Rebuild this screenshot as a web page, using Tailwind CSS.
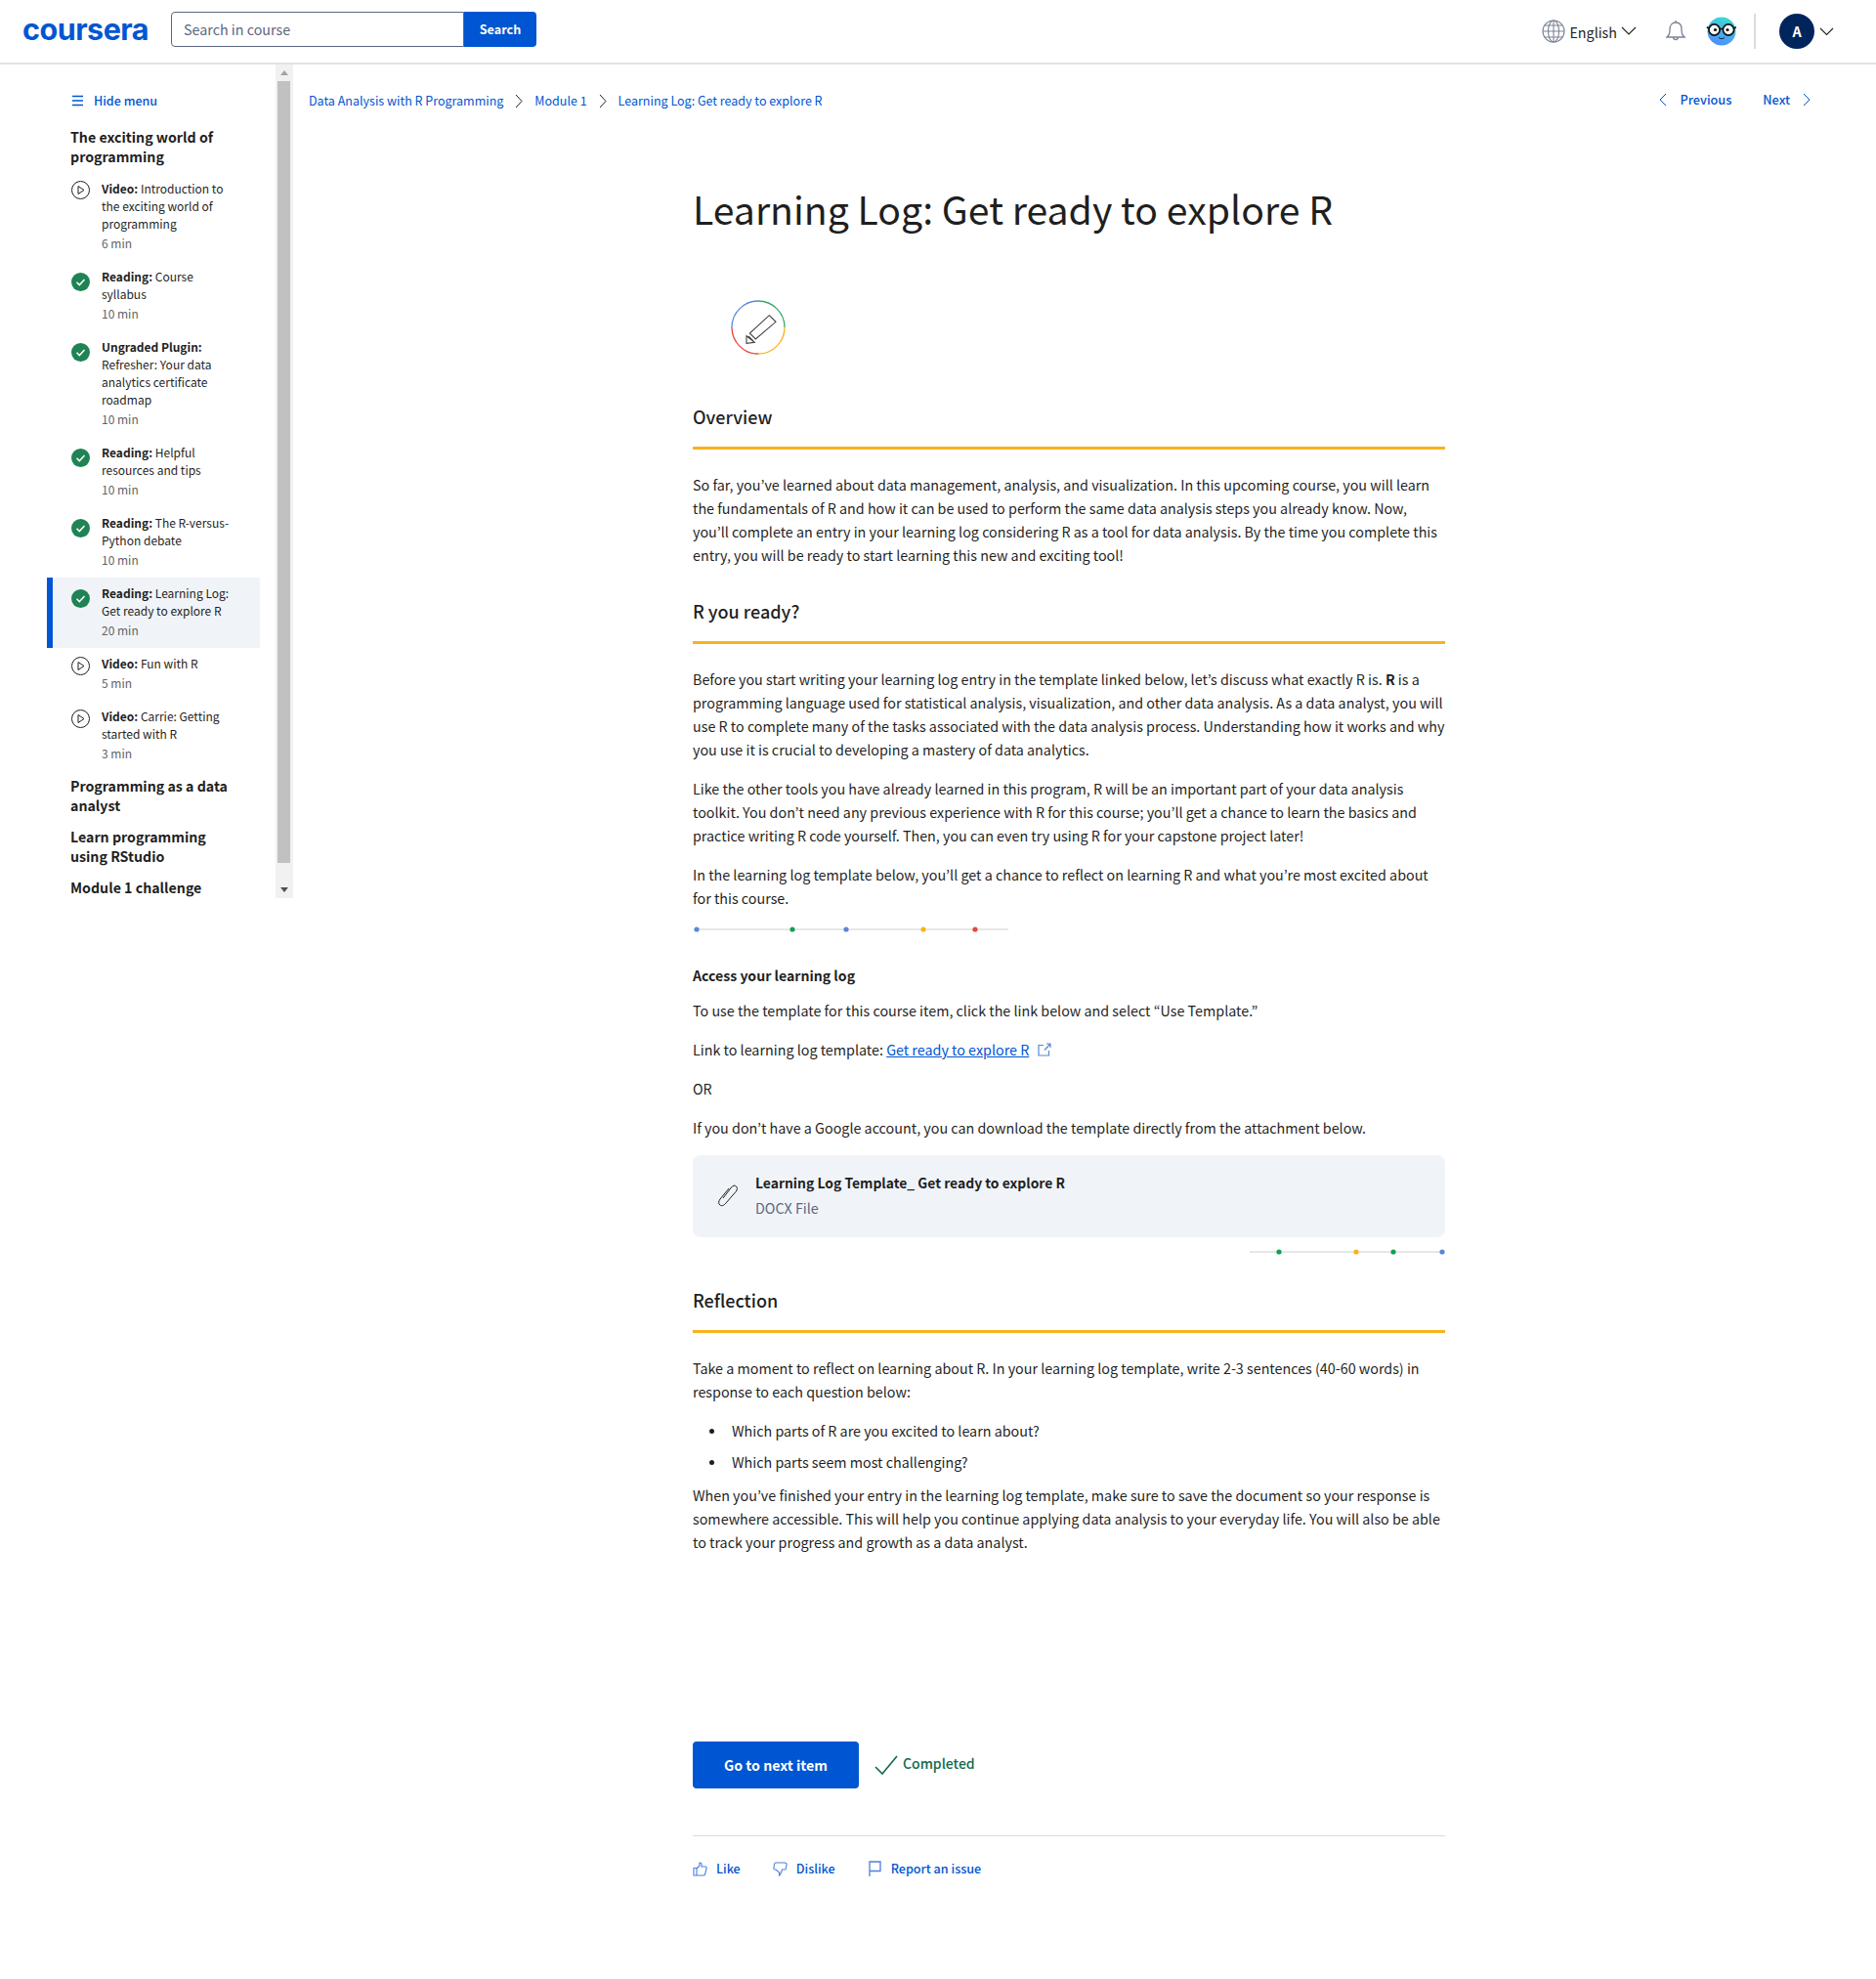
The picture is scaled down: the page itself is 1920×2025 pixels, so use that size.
<!DOCTYPE html>
<html lang="en">
<head>
<meta charset="utf-8">
<title>Learning Log</title>
<script src="https://cdn.jsdelivr.net/npm/@tailwindcss/browser@4"></script>
</head>
<body class="bg-white text-[#1f1f1f] font-['Noto_Sans_CJK_KR','Noto_Sans',sans-serif] w-[1920px] h-[2025px] overflow-hidden">
<header class="h-[66px] border-b-2 border-[#e3e3e3] flex items-center relative">
  <div class="w-[152px] ml-[23px] font-['Inter',sans-serif] font-bold text-[30.5px] leading-[30px] tracking-[-0.5px] text-[#0056d2] mt-[-4px]">coursera</div>
  <div class="flex mt-[-4px] h-[36px]">
    <div class="w-[300px] h-[36px] border border-[#5b6780] rounded-l-[4px] pl-[12px] text-[14.3px] leading-[33px] text-[#5b6780]">Search in course</div>
    <div class="w-[74px] h-[36px] bg-[#0056d2] rounded-r-[4px] text-white font-bold text-[12.6px] leading-[36px] text-center">Search</div>
  </div>
  <div class="ml-auto flex items-center h-[36px]">
    <svg class="w-[24px] h-[24px]" viewBox="0 0 24 24" fill="none" stroke="#7a8296" stroke-width="1.1"><circle cx="12" cy="12" r="11"/><ellipse cx="12" cy="12" rx="5.5" ry="11"/><path d="M12 1v22M1 12h22M3 6h18M3 18h18"/></svg>
    <span class="ml-[4px] text-[14.3px] leading-[24px] mt-[1px]">English</span>
    <svg class="ml-[4px] w-[16px] h-[10px]" viewBox="0 0 16 10" fill="none" stroke="#1f1f1f" stroke-width="1.1"><path d="M1 1l7 7 7-7"/></svg>
    <svg class="ml-[29px] w-[22px] h-[24px]" viewBox="0 0 22 24" fill="none" stroke="#7a8296" stroke-width="1.3"><path d="M2 18c2-2 3-3 3-8s3-7 6-7 6 2 6 7 1 6 3 8z"/><path d="M11 3V1M8.5 18a2.5 2.5 0 0 0 5 0"/></svg>
    <svg class="ml-[20px] w-[32px] h-[32px]" viewBox="0 0 32 32"><defs><linearGradient id="og" x1="0.7" y1="0" x2="0.4" y2="1"><stop offset="0" stop-color="#3fdcd0"/><stop offset="1" stop-color="#4d8dff"/></linearGradient></defs><circle cx="16" cy="16" r="14.5" fill="url(#og)"/><circle cx="8.5" cy="14.5" r="5.6" fill="#fff" stroke="#111" stroke-width="1.7"/><circle cx="23" cy="14.5" r="5.6" fill="#fff" stroke="#111" stroke-width="1.7"/><circle cx="9.5" cy="14.5" r="1.6" fill="#111"/><circle cx="22" cy="14.5" r="1.6" fill="#111"/><path d="M14 13.5h3.500M3 13L.8 11.800M28.500 13l2.300-1.200" stroke="#111" stroke-width="1.7"/><path d="M13 22.500c2 1.500 4 1.500 6 0" fill="none" stroke="#123" stroke-width="1"/></svg>
    <div class="ml-[17px] w-[2px] h-[36px] bg-[#dcdcdc]"></div>
    <div class="ml-[24px] w-[36px] h-[36px] rounded-full bg-[#00255d] text-white font-bold text-[14.4px] leading-[35px] text-center">A</div>
    <svg class="ml-[5px] mr-[43px] w-[15px] h-[9px]" viewBox="0 0 15 9" fill="none" stroke="#1f1f1f" stroke-width="1.1"><path d="M1 1l6.500 6.500L14 1"/></svg>
  </div>
</header>
<div class="flex">
  <aside class="w-[300px] h-[853px] flex shrink-0">
    <div class="w-[282px] pl-[48px] pr-[16px] pt-[27px]">
      <div class="flex items-center pl-[25px] h-[20px] text-[#0056d2] text-[12.5px] font-medium">
        <svg class="w-[13px] h-[12px]" viewBox="0 0 13 12" fill="none" stroke="#0056d2" stroke-width="1.6"><path d="M1 1.500h11M1 6h11M1 10.500h11"/></svg>
        <span class="ml-[10px]">Hide menu</span>
      </div>
      <div class="pl-[24px] mt-[17px] text-[14.2px] leading-[20px] font-bold w-[218px]">The exciting world of programming</div>
      <ul class="mt-[7px]">
        <li class="flex pl-[25px] pt-[7px] h-[90px]">
          <svg class="w-[19px] h-[19px] shrink-0 mt-[1px]" viewBox="0 0 19 19" fill="none" stroke="#1f1f1f" stroke-width="1"><circle cx="9.500" cy="9.500" r="9"/><path d="M7 5.500v8l6-4z"/></svg>
          <div class="ml-[12px] w-[134px] text-[12px] leading-[18px]"><b>Video:</b> Introduction to the exciting world of programming<div class="text-[#636363] leading-[22px]">6 min</div></div>
        </li>
        <li class="flex pl-[25px] pt-[7px] h-[72px]">
          <svg class="w-[19px] h-[19px] shrink-0 mt-[5px]" viewBox="0 0 19 19"><circle cx="9.500" cy="9.500" r="9.500" fill="#1f8354"/><path d="M5.500 9.800l2.800 2.800 5.200-5.600" fill="none" stroke="#fff" stroke-width="1.500"/></svg>
          <div class="ml-[12px] w-[134px] text-[12px] leading-[18px]"><b>Reading:</b> Course syllabus<div class="text-[#636363] leading-[22px]">10 min</div></div>
        </li>
        <li class="flex pl-[25px] pt-[7px] h-[108px]">
          <svg class="w-[19px] h-[19px] shrink-0 mt-[5px]" viewBox="0 0 19 19"><circle cx="9.500" cy="9.500" r="9.500" fill="#1f8354"/><path d="M5.500 9.800l2.800 2.800 5.200-5.600" fill="none" stroke="#fff" stroke-width="1.500"/></svg>
          <div class="ml-[12px] w-[122px] text-[12px] leading-[18px]"><b>Ungraded Plugin:</b> Refresher: Your data analytics certificate roadmap<div class="text-[#636363] leading-[22px]">10 min</div></div>
        </li>
        <li class="flex pl-[25px] pt-[7px] h-[72px]">
          <svg class="w-[19px] h-[19px] shrink-0 mt-[5px]" viewBox="0 0 19 19"><circle cx="9.500" cy="9.500" r="9.500" fill="#1f8354"/><path d="M5.500 9.800l2.800 2.800 5.200-5.600" fill="none" stroke="#fff" stroke-width="1.500"/></svg>
          <div class="ml-[12px] w-[134px] text-[12px] leading-[18px]"><b>Reading:</b> Helpful resources and tips<div class="text-[#636363] leading-[22px]">10 min</div></div>
        </li>
        <li class="flex pl-[25px] pt-[7px] h-[72px]">
          <svg class="w-[19px] h-[19px] shrink-0 mt-[5px]" viewBox="0 0 19 19"><circle cx="9.500" cy="9.500" r="9.500" fill="#1f8354"/><path d="M5.500 9.800l2.800 2.800 5.200-5.600" fill="none" stroke="#fff" stroke-width="1.500"/></svg>
          <div class="ml-[12px] w-[136px] text-[12px] leading-[18px]"><b>Reading:</b> The R-versus-Python debate<div class="text-[#636363] leading-[22px]">10 min</div></div>
        </li>
        <li class="flex pl-[19px] pt-[7px] h-[72px] bg-[#f0f4f9] border-l-[6px] border-[#0056d2]">
          <svg class="w-[19px] h-[19px] shrink-0 mt-[5px]" viewBox="0 0 19 19"><circle cx="9.500" cy="9.500" r="9.500" fill="#1f8354"/><path d="M5.500 9.800l2.800 2.800 5.200-5.600" fill="none" stroke="#fff" stroke-width="1.500"/></svg>
          <div class="ml-[12px] w-[136px] text-[12px] leading-[18px]"><b>Reading:</b> Learning Log: Get ready to explore R<div class="text-[#636363] leading-[22px]">20 min</div></div>
        </li>
        <li class="flex pl-[25px] pt-[7px] h-[54px]">
          <svg class="w-[19px] h-[19px] shrink-0 mt-[2px]" viewBox="0 0 19 19" fill="none" stroke="#1f1f1f" stroke-width="1"><circle cx="9.500" cy="9.500" r="9"/><path d="M7 5.500v8l6-4z"/></svg>
          <div class="ml-[12px] w-[134px] text-[12px] leading-[18px]"><b>Video:</b> Fun with R<div class="text-[#636363] leading-[22px]">5 min</div></div>
        </li>
        <li class="flex pl-[25px] pt-[7px] h-[72px]">
          <svg class="w-[19px] h-[19px] shrink-0 mt-[2px]" viewBox="0 0 19 19" fill="none" stroke="#1f1f1f" stroke-width="1"><circle cx="9.500" cy="9.500" r="9"/><path d="M7 5.500v8l6-4z"/></svg>
          <div class="ml-[12px] w-[134px] text-[12px] leading-[18px]"><b>Video:</b> Carrie: Getting started with R<div class="text-[#636363] leading-[22px]">3 min</div></div>
        </li>
      </ul>
      <div class="pl-[24px] mt-[5px] text-[14.2px] leading-[20px] font-bold w-[194px]">Programming as a data analyst</div>
      <div class="pl-[24px] mt-[12px] text-[14.2px] leading-[20px] font-bold w-[194px]">Learn programming using RStudio</div>
      <div class="pl-[24px] mt-[12px] text-[14.2px] leading-[20px] font-bold">Module 1 challenge</div>
    </div>
    <div class="w-[18px] bg-[#f1f1f1] flex flex-col items-center pr-[1px]">
      <div class="h-[17px] flex items-center justify-center"><div class="border-x-[4px] border-x-transparent border-b-[5px] border-b-[#a3a3a3]"></div></div>
      <div class="w-[13px] h-[800px] bg-[#c1c1c1]"></div>
      <div class="mt-auto h-[17px] flex items-center justify-center"><div class="border-x-[4px] border-x-transparent border-t-[5px] border-t-[#505050]"></div></div>
    </div>
  </aside>
  <main class="w-[1620px]">
    <nav class="flex items-center h-[20px] mt-[27px] pl-[16px] pr-[67px] text-[12.5px] text-[#0056d2]">
      <span>Data Analysis with R Programming</span>
      <svg class="mx-[12px] w-[8px] h-[15px]" viewBox="0 0 8 15" fill="none" stroke="#1f1f1f" stroke-width="1"><path d="M1 1l6 6.500L1 14"/></svg>
      <span>Module 1</span>
      <svg class="mx-[12px] w-[8px] h-[15px]" viewBox="0 0 8 15" fill="none" stroke="#1f1f1f" stroke-width="1"><path d="M1 1l6 6.500L1 14"/></svg>
      <span>Learning Log: Get ready to explore R</span>
      <div class="ml-auto flex items-center font-medium text-[12.7px] mt-[-2px]">
        <svg class="w-[8px] h-[14px]" viewBox="0 0 8 14" fill="none" stroke="#0056d2" stroke-width="1"><path d="M7 1L1 7l6 6"/></svg>
        <span class="ml-[14px]">Previous</span>
        <span class="ml-[32px]">Next</span>
        <svg class="ml-[13px] w-[8px] h-[14px]" viewBox="0 0 8 14" fill="none" stroke="#0056d2" stroke-width="1"><path d="M1 1l6 6-6 6"/></svg>
      </div>
    </nav>
    <article class="ml-[409px] w-[770px] text-[14.32px] leading-[24px]">
      <h1 class="mt-[72px] text-[39.2px] leading-[56px] font-normal">Learning Log: Get ready to explore R</h1>
      <svg class="ml-[39px] mt-[66px] w-[56px] h-[56px]" viewBox="0 0 56 56" fill="none" stroke-width="1.3">
        <path d="M1 28A27 27 0 0 1 28 1" stroke="#5b87d6"/><path d="M28 1A27 27 0 0 1 55 28" stroke="#3aa76d"/><path d="M55 28A27 27 0 0 1 28 55" stroke="#f9b21c"/><path d="M28 55A27 27 0 0 1 1 28" stroke="#e5483f"/>
        <path d="M39.300 15.700L46 22.300 25.300 40 19.300 34zM16 36.700v7.600l8.300-1zM18 37l5 5" stroke="#444" stroke-width="1.1"/>
      </svg>
      <h2 class="mt-[48px] text-[18px] leading-[30px] font-medium">Overview</h2>
      <div class="mt-[16px] h-[3px] bg-[#f9b21c]"></div>
      <p class="mt-[24px]">So far, you’ve learned about data management, analysis, and visualization. In this upcoming course, you will learn the fundamentals of R and how it can be used to perform the same data analysis steps you already know. Now, you’ll complete an entry in your learning log considering R as a tool for data analysis. By the time you complete this entry, you will be ready to start learning this new and exciting tool!</p>
      <h2 class="mt-[30px] text-[18px] leading-[30px] font-medium">R you ready?</h2>
      <div class="mt-[16px] h-[3px] bg-[#f9b21c]"></div>
      <p class="mt-[24px]">Before you start writing your learning log entry in the template linked below, let’s discuss what exactly R is. <b>R</b> is a programming language used for statistical analysis, visualization, and other data analysis. As a data analyst, you will use R to complete many of the tasks associated with the data analysis process. Understanding how it works and why you use it is crucial to developing a mastery of data analytics.</p>
      <p class="mt-[16px]">Like the other tools you have already learned in this program, R will be an important part of your data analysis toolkit. You don’t need any previous experience with R for this course; you’ll get a chance to learn the basics and practice writing R code yourself. Then, you can even try using R for your capstone project later!</p>
      <p class="mt-[16px]">In the learning log template below, you’ll get a chance to reflect on learning R and what you’re most excited about for this course.</p>
      <svg class="mt-[16px] block" width="325" height="8" viewBox="0 0 325 8"><path d="M3 4h320" stroke="#cfcfcf" stroke-width="1.2"/><circle cx="4" cy="4" r="2.6" fill="#5b87d6"/><circle cx="102" cy="4" r="2.6" fill="#12a150"/><circle cx="157" cy="4" r="2.6" fill="#5b87d6"/><circle cx="236" cy="4" r="2.6" fill="#f9b21c"/><circle cx="289" cy="4" r="2.6" fill="#e5483f"/></svg>
      <p class="mt-[31px] font-bold text-[14.1px]">Access your learning log</p>
      <p class="mt-[12px]">To use the template for this course item, click the link below and select “Use Template.”</p>
      <p class="mt-[16px] flex items-center">Link to learning log template:&nbsp;<a class="text-[#0056d2] underline">Get ready to explore R</a>
        <svg class="ml-[9px] w-[14px] h-[14px]" viewBox="0 0 14 14" fill="none" stroke="#5b87d6" stroke-width="1.2"><path d="M6 2.500H1v10.500h10.500V8M7 7.500l6-6.500M9 1h4v4"/></svg>
      </p>
      <p class="mt-[16px]">OR</p>
      <p class="mt-[16px]">If you don’t have a Google account, you can download the template directly from the attachment below.</p>
      <div class="mt-[16px] h-[84px] bg-[#f0f4f9] rounded-[8px] flex items-center pl-[26px]">
        <svg class="w-[20px] h-[24px] mb-[2px]" viewBox="0 0 20 24" fill="none" stroke="#1f1f1f" stroke-width="1"><path d="M5 15L13.500 4C15 2 17 1.500 18.500 3 20 4.500 19.500 6.500 18 8.500L8 20C6 22.500 3.500 23.500 1.800 22 0 20.500.5 18 2 16L11 5"/></svg>
        <div class="ml-[18px] mb-[2px]">
          <div class="font-bold text-[13.9px] leading-[26px]">Learning Log Template_ Get ready to explore R</div>
          <div class="text-[#5b6780] leading-[26px]">DOCX File</div>
        </div>
      </div>
      <svg class="ml-[570px] mt-[11px] block" width="200" height="8" viewBox="0 0 200 8"><path d="M0 4h197" stroke="#cfcfcf" stroke-width="1.2"/><circle cx="30" cy="4" r="2.6" fill="#12a150"/><circle cx="109" cy="4" r="2.6" fill="#f9b21c"/><circle cx="147" cy="4" r="2.6" fill="#12a150"/><circle cx="197" cy="4" r="2.6" fill="#5b87d6"/></svg>
      <h2 class="mt-[30px] text-[18px] leading-[30px] font-medium">Reflection</h2>
      <div class="mt-[16px] h-[3px] bg-[#f9b21c]"></div>
      <p class="mt-[24px]">Take a moment to reflect on learning about R. In your learning log template, write 2-3 sentences (40-60 words) in response to each question below:</p>
      <ul class="mt-[16px]">
        <li class="flex items-center"><span class="ml-[17px] w-[5px] h-[5px] rounded-full bg-[#1f1f1f]"></span><span class="ml-[18px]">Which parts of R are you excited to learn about?</span></li>
        <li class="flex items-center mt-[8px]"><span class="ml-[17px] w-[5px] h-[5px] rounded-full bg-[#1f1f1f]"></span><span class="ml-[18px]">Which parts seem most challenging?</span></li>
      </ul>
      <p class="mt-[10px]">When you’ve finished your entry in the learning log template, make sure to save the document so your response is somewhere accessible. This will help you continue applying data analysis to your everyday life. You will also be able to track your progress and growth as a data analyst.</p>
      <div class="mt-[192px] flex items-center">
        <div class="w-[170px] h-[48px] bg-[#0056d2] rounded-[4px] text-white font-bold text-[14.2px] text-center leading-[48px]">Go to next item</div>
        <svg class="ml-[16px] w-[24px] h-[20px]" viewBox="0 0 24 20" fill="none" stroke="#0f6b4a" stroke-width="1.6"><path d="M1 12l7 7L23 1"/></svg>
        <span class="ml-[5px] mb-[5px] text-[#0f6b4a] font-medium text-[14px]">Completed</span>
      </div>
      <div class="mt-[48px] h-[1px] bg-[#dcdcdc]"></div>
      <div class="mt-[23px] flex items-center text-[12.6px] text-[#0056d2] font-medium h-[20px]">
        <svg class="w-[15px] h-[15px]" viewBox="0 0 15 15" fill="none" stroke="#4d80d8" stroke-width="1.1"><path d="M4 6.500H1v7.500h3zM4 7l3-3V1c1.500 0 2.500 1 2 4h4c1 0 1.500 1 1 2l-1.500 6c-.2.700-.7 1-1.500 1H4"/></svg>
        <span class="ml-[9px]">Like</span>
        <svg class="ml-[33px] w-[15px] h-[15px]" viewBox="0 0 15 15" fill="none" stroke="#4d80d8" stroke-width="1.1"><path d="M3 1h9c1.500 0 2.500 1 2 2.500L13 8H9.500l-1 3c-.3 1-1 2-2 3V11L3 8H2C1 8 .7 7 1 6l.5-3.500C1.700 1.500 2 1 3 1z"/></svg>
        <span class="ml-[9px]">Dislike</span>
        <svg class="ml-[34px] w-[13px] h-[16px]" viewBox="0 0 13 16" fill="none" stroke="#4d80d8" stroke-width="1.3"><path d="M1 16V1h11v9.500H1"/></svg>
        <span class="ml-[10px]">Report an issue</span>
      </div>
    </article>
  </main>
</div>
</body>
</html>
